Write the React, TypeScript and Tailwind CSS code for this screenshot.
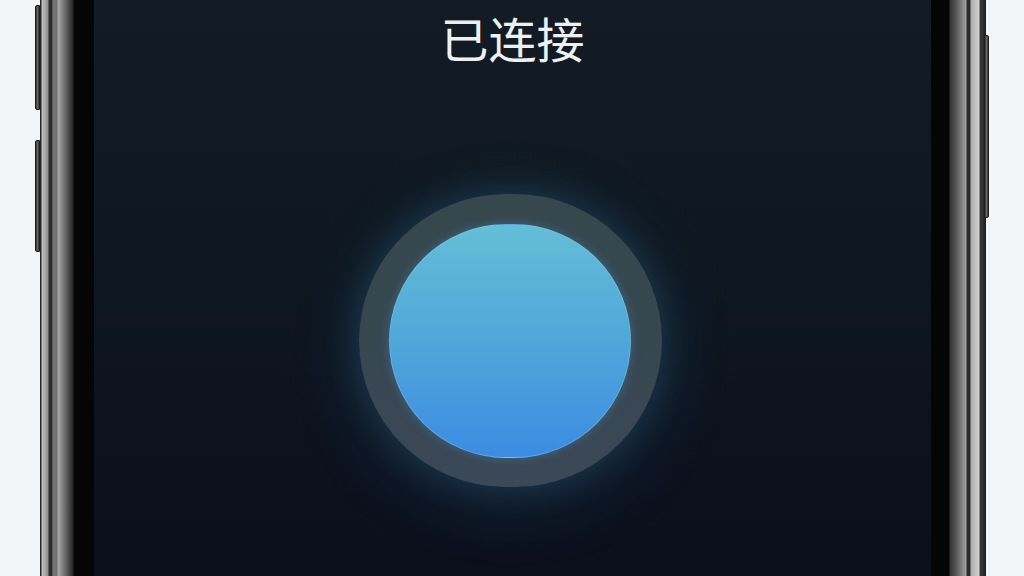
import React from "react";

const SideButton = ({ className }: { className: string }) => (
  <div
    className={`w-[5px] bg-[linear-gradient(90deg,#2a2a2a,#6a6a6a_40%,#3a3a3a)] border border-[#1c1c1c] ${className}`}
  />
);

const App = () => {
  return (
    <div className="flex h-[576px] w-[1024px] overflow-hidden bg-[#f4f5f6]">
      {/* left side with volume keys */}
      <div className="flex w-[40px] flex-col items-end">
        <SideButton className="mt-[5px] h-[105px] rounded-l-[2px]" />
        <SideButton className="mt-[30px] h-[112px] rounded-l-[2px]" />
      </div>

      {/* left frame */}
      <div className="w-[54px] bg-[linear-gradient(90deg,#1c1c1c_0px,#2a2a2a_1px,#c2c2c2_2px,#8c8c8c_8px,#2c2c2c_9px,#2c2c2c_12px,#7a7a7a_13px,#6c6c6c_17px,#a8a8a8_18px,#5a5a5a_27px,#262626_33px,#050505_34px,#050505_54px)]" />

      {/* screen */}
      <div className="relative flex w-[837px] flex-col items-center bg-[linear-gradient(180deg,#131c24_0%,#0f1820_40%,#0b0f1c_100%)]">
        <div className="pointer-events-none absolute inset-0 bg-[radial-gradient(ellipse_230px_220px_at_416px_345px,rgba(35,80,105,0.45),rgba(20,45,65,0.15)_65%,transparent_100%)]" />
        <div className="relative pt-[13px] text-[48px] font-normal leading-none text-[#eef0f2] [font-family:'Noto_Sans_CJK_SC','Noto_Sans',sans-serif]">
          已连接
        </div>

        <div className="relative mr-[5px] mt-[133px] flex h-[293px] w-[303px] items-center justify-center rounded-full bg-[linear-gradient(180deg,#36474e,#374750_50%,#3b4858)] shadow-[0_0_30px_4px_rgba(35,80,105,0.45),0_14px_60px_6px_rgba(35,75,115,0.25)]">
          <div className="h-[234px] w-[242px] rounded-full border border-[#8fd0ec]/40 bg-[linear-gradient(180deg,#64bed7_0%,#52a9d9_45%,#3b8ce2_100%)] shadow-[0_0_10px_1px_rgba(70,160,220,0.3)]" />
        </div>
      </div>

      {/* right frame */}
      <div className="w-[55px] bg-[linear-gradient(90deg,#050505_0px,#050505_18px,#333333_19px,#5c5c5c_26px,#a2a2a2_35px,#2c2c2c_36px,#2c2c2c_39px,#b0b0b0_40px,#d0d0d0_48px,#3a3a3a_49px,#2a2a2a_53px,#1a1a1a_55px)]" />

      {/* right side with power key */}
      <div className="flex flex-1 flex-col items-start">
        <SideButton className="-ml-[2px] mt-[35px] h-[183px] rounded-r-[2px]" />
      </div>
    </div>
  );
};

export default App;
